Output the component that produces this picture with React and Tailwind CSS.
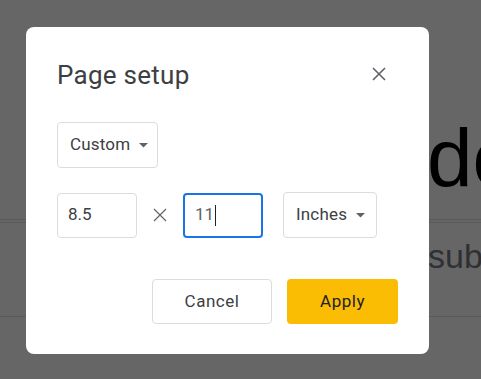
import React from 'react';

const Caret = () => (
  <svg width="9" height="5" viewBox="0 0 9 5" className="ml-[9px]">
    <path d="M0 0 L9 0 L4.5 4.5 Z" fill="#5f6368" />
  </svg>
);

const Dropdown = ({ label, className }) => (
  <button className={`flex items-center h-[46px] pl-[12px] pr-[9px] border border-[#dadce0] rounded-[4px] text-[17px] tracking-[0.01em] text-[#3c4043] bg-white ${className}`}>
    {label}
    <Caret />
  </button>
);

const App = () => {
  return (
    <div className="relative w-[481px] h-[379px] overflow-hidden bg-[#666666]" style={{ fontFamily: 'Roboto, "Open Sans", sans-serif' }}>
      {/* the document behind the overlay */}
      <div className="flex flex-col pt-[108px]">
        <div className="pl-[427px] text-[82px] leading-[100px] text-black whitespace-nowrap" style={{ fontFamily: '"Liberation Sans", Arial, sans-serif' }}>
          do
        </div>
        <div className="mt-[11px] h-[1px] bg-[#5a5a5a]" />
        <div className="mt-[2px] h-[1px] bg-[#5a5a5a]" />
        <div className="pl-[428px] mt-[13px] text-[34px] leading-[40px] text-[#2f3034] whitespace-nowrap" style={{ fontFamily: '"Liberation Sans", Arial, sans-serif' }}>
          sub
        </div>
        <div className="mt-[40px] h-[1px] bg-[#5a5a5a]" />
      </div>

      {/* dialog */}
      <div className="absolute left-[26px] top-[27px] w-[403px] h-[327px] bg-white rounded-[8px] pl-[31px] pr-[31px] pt-[29px]">
        <div className="flex items-center justify-between">
          <h2 className="text-[26px] leading-[38px] tracking-[0.01em] text-[#3c4043]">Page setup</h2>
          <button className="mr-[12px] -mt-[2px]">
            <svg width="14" height="14" viewBox="0 0 14 14">
              <path d="M1 1 L13 13 M13 1 L1 13" stroke="#5f6368" strokeWidth="1.6" />
            </svg>
          </button>
        </div>

        <div className="mt-[28px] flex">
          <Dropdown label="Custom" />
        </div>

        <div className="mt-[24px] flex items-center">
          <div className="w-[80px] h-[45px] border border-[#dadce0] rounded-[4px] flex items-center pl-[10px] text-[17px] text-[#3c4043]">
            8.5
          </div>
          <svg width="14" height="14" viewBox="0 0 14 14" className="mx-[16px]">
            <path d="M1 1 L13 13 M13 1 L1 13" stroke="#5f6368" strokeWidth="1.2" />
          </svg>
          <div className="w-[80px] h-[45px] border-2 border-[#1a73e8] rounded-[4px] flex items-center pl-[10px] text-[17px] text-[#5f6368]">
            11<span className="inline-block w-[1px] h-[21px] bg-[#202124] ml-[1px]" />
          </div>
          <Dropdown label="Inches" className="ml-[20px] w-[94px]" />
        </div>

        <div className="mt-[41px] flex justify-end gap-[15px]">
          <button className="w-[120px] h-[45px] border border-[#dadce0] rounded-[4px] text-[17px] tracking-[0.03em] text-[#3c4043] bg-white">
            Cancel
          </button>
          <button className="w-[111px] h-[45px] rounded-[4px] text-[17px] tracking-[0.03em] text-[#202124] bg-[#fbbc04]">
            Apply
          </button>
        </div>
      </div>
    </div>
  );
};

export default App;
